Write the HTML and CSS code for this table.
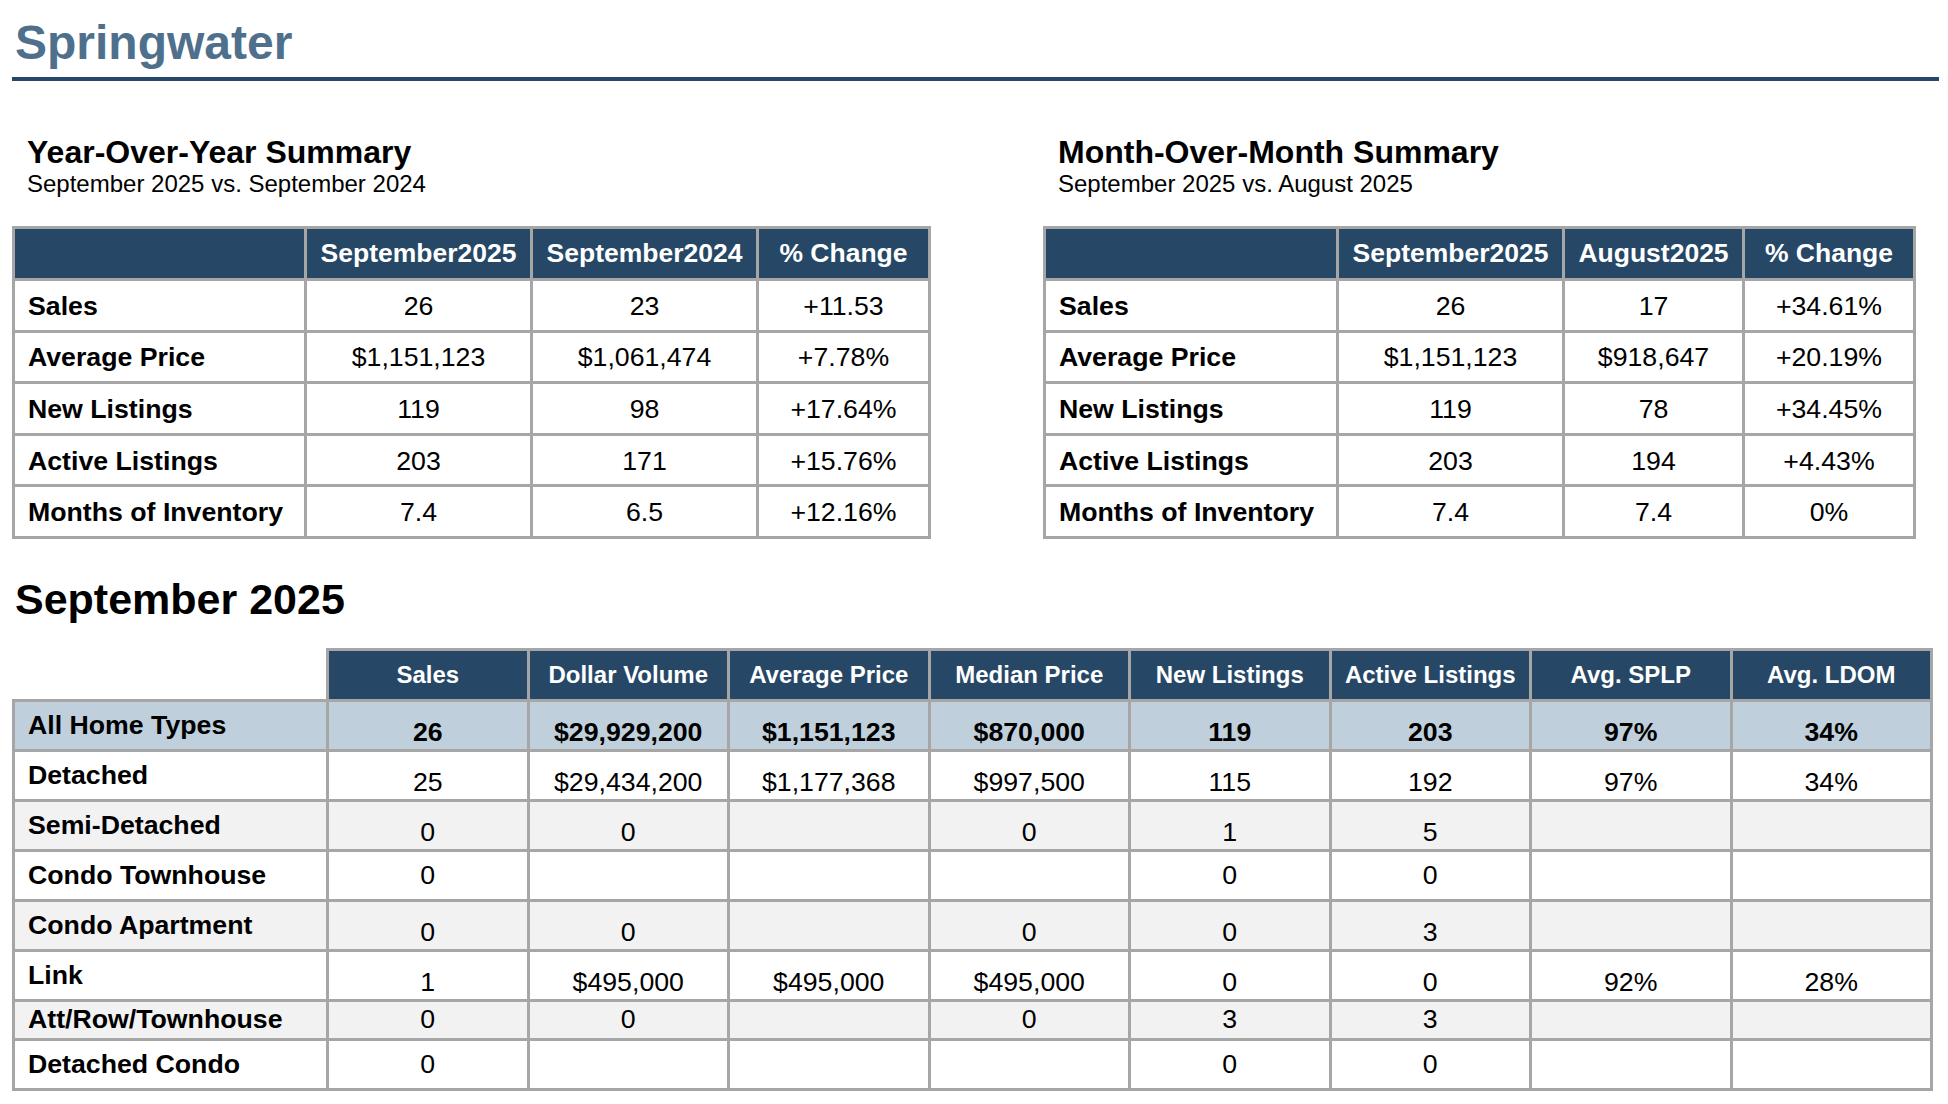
FILE: index.html
```html
<!DOCTYPE html>
<html lang="en">
<head>
<meta charset="utf-8">
<title>Springwater</title>
<link rel="stylesheet" href="styles.css">
</head>
<body>
<div class="page">
  <h1 class="title">Springwater</h1>

  <div class="summaries">
    <section class="summary">
      <div class="summary-head">
        <h2>Year-Over-Year Summary</h2>
        <p>September 2025 vs. September 2024</p>
      </div>
      <table class="sum-table yoy">
        <colgroup><col class="c-label"><col class="c-a"><col class="c-b"><col class="c-c"></colgroup>
        <thead>
          <tr><th></th><th>September2025</th><th>September2024</th><th>% Change</th></tr>
        </thead>
        <tbody>
          <tr><td>Sales</td><td>26</td><td>23</td><td>+11.53</td></tr>
          <tr><td>Average Price</td><td>$1,151,123</td><td>$1,061,474</td><td>+7.78%</td></tr>
          <tr><td>New Listings</td><td>119</td><td>98</td><td>+17.64%</td></tr>
          <tr><td>Active Listings</td><td>203</td><td>171</td><td>+15.76%</td></tr>
          <tr><td>Months of Inventory</td><td>7.4</td><td>6.5</td><td>+12.16%</td></tr>
        </tbody>
      </table>
    </section>

    <section class="summary">
      <div class="summary-head">
        <h2>Month-Over-Month Summary</h2>
        <p>September 2025 vs. August 2025</p>
      </div>
      <table class="sum-table mom">
        <colgroup><col class="c-label"><col class="c-a"><col class="c-b"><col class="c-c"></colgroup>
        <thead>
          <tr><th></th><th>September2025</th><th>August2025</th><th>% Change</th></tr>
        </thead>
        <tbody>
          <tr><td>Sales</td><td>26</td><td>17</td><td>+34.61%</td></tr>
          <tr><td>Average Price</td><td>$1,151,123</td><td>$918,647</td><td>+20.19%</td></tr>
          <tr><td>New Listings</td><td>119</td><td>78</td><td>+34.45%</td></tr>
          <tr><td>Active Listings</td><td>203</td><td>194</td><td>+4.43%</td></tr>
          <tr><td>Months of Inventory</td><td>7.4</td><td>7.4</td><td>0%</td></tr>
        </tbody>
      </table>
    </section>
  </div>

  <h2 class="month-title">September 2025</h2>
  <table class="big-table">
    <colgroup>
      <col class="b-label"><col class="b-col"><col class="b-col"><col class="b-col"><col class="b-col"><col class="b-col"><col class="b-col"><col class="b-col"><col class="b-col">
    </colgroup>
    <thead>
      <tr>
        <th class="blank"></th><th>Sales</th><th>Dollar Volume</th><th>Average Price</th><th>Median Price</th><th>New Listings</th><th>Active Listings</th><th>Avg. SPLP</th><th>Avg. LDOM</th>
      </tr>
    </thead>
    <tbody>
      <tr class="all lo"><td>All Home Types</td><td>26</td><td>$29,929,200</td><td>$1,151,123</td><td>$870,000</td><td>119</td><td>203</td><td>97%</td><td>34%</td></tr>
      <tr class="lo"><td>Detached</td><td>25</td><td>$29,434,200</td><td>$1,177,368</td><td>$997,500</td><td>115</td><td>192</td><td>97%</td><td>34%</td></tr>
      <tr class="alt lo"><td>Semi-Detached</td><td>0</td><td>0</td><td></td><td>0</td><td>1</td><td>5</td><td></td><td></td></tr>
      <tr><td>Condo Townhouse</td><td>0</td><td></td><td></td><td></td><td>0</td><td>0</td><td></td><td></td></tr>
      <tr class="alt lo"><td>Condo Apartment</td><td>0</td><td>0</td><td></td><td>0</td><td>0</td><td>3</td><td></td><td></td></tr>
      <tr class="lo"><td>Link</td><td>1</td><td>$495,000</td><td>$495,000</td><td>$495,000</td><td>0</td><td>0</td><td>92%</td><td>28%</td></tr>
      <tr class="alt short"><td>Att/Row/Townhouse</td><td>0</td><td>0</td><td></td><td>0</td><td>3</td><td>3</td><td></td><td></td></tr>
      <tr><td>Detached Condo</td><td>0</td><td></td><td></td><td></td><td>0</td><td>0</td><td></td><td></td></tr>
    </tbody>
  </table>
</div>
</body>
</html>
```

FILE: styles.css
```css
* {
  box-sizing: border-box;
}

body {
  margin: 0;
  background: #ffffff;
  color: #000000;
  font-family: "Liberation Sans", Arial, sans-serif;
}

.page {
  padding: 16px 9px 0 12px;
}

.title {
  margin: 0;
  padding: 0 0 7px 3px;
  font-size: 48px;
  line-height: 54px;
  font-weight: bold;
  color: #4e708c;
  border-bottom: 4px solid #264766;
}

.summaries {
  display: grid;
  grid-template-columns: 918px 874px;
  column-gap: 113px;
  margin-top: 53px;
}

.summary-head {
  padding-left: 15px;
}

.summary-head h2 {
  margin: 0;
  font-size: 32px;
  line-height: 36px;
  font-weight: bold;
}

.summary-head p {
  margin: 0;
  font-size: 24px;
  line-height: 28px;
}

.sum-table {
  margin-top: 28px;
  border-collapse: collapse;
  table-layout: fixed;
  font-size: 26.7px;
}

.sum-table.yoy {
  width: 916px;
}

.sum-table.mom {
  width: 870px;
}

.yoy .c-label { width: 292px; }
.yoy .c-a { width: 226px; }
.yoy .c-b { width: 226px; }
.yoy .c-c { width: 172px; }

.mom .c-label { width: 293px; }
.mom .c-a { width: 226px; }
.mom .c-b { width: 180px; }
.mom .c-c { width: 171px; }

.sum-table th,
.sum-table td {
  border: 3px solid #a6a6a6;
  padding: 0;
  text-align: center;
  vertical-align: middle;
  white-space: nowrap;
}

.sum-table th {
  height: 52px;
  background: #264766;
  color: #ffffff;
  font-size: 26.5px;
  font-weight: bold;
}

.sum-table td {
  height: 51.6px;
  padding-top: 2px;
}

.sum-table td:first-child {
  text-align: left;
  padding-left: 13px;
  font-weight: bold;
}

.month-title {
  margin: 36px 0 0 0;
  padding-left: 3px;
  font-size: 43px;
  line-height: 48px;
  font-weight: bold;
}

.big-table {
  margin-top: 25px;
  width: 1918px;
  border-collapse: collapse;
  table-layout: fixed;
  font-size: 26.7px;
}

.b-label { width: 314px; }
.b-col { width: 200.5px; }

.big-table th,
.big-table td {
  border: 3px solid #a6a6a6;
  padding: 0;
  text-align: center;
  vertical-align: middle;
  white-space: nowrap;
}

.big-table th {
  height: 51px;
  background: #264766;
  color: #ffffff;
  font-size: 24px;
  font-weight: bold;
}

.big-table th.blank {
  background: transparent;
  border-top: none;
  border-left: none;
}

.big-table td {
  height: 50px;
}

.big-table td:first-child {
  text-align: left;
  padding-left: 13px;
  font-weight: bold;
}

.big-table tr.lo td:not(:first-child) {
  padding-top: 14px;
}

.big-table tr.short td {
  height: 39px;
}

.big-table tr.alt td {
  background: #f2f2f2;
}

.big-table tr.all td {
  background: #bfd0dc;
  font-weight: bold;
}
```
